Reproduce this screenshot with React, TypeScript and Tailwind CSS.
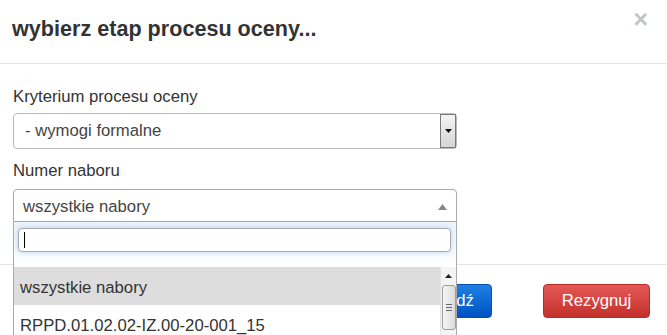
export default function App() {
  return (
    <div className="relative h-[335px] w-[667px] overflow-hidden bg-white font-['Liberation_Sans',Arial,sans-serif] text-[#333]">
      <header className="flex h-[64px] items-start justify-between border-b border-[#e5e5e5] pl-[12px] pr-[19px] pt-[15px]">
        <h4 className="text-[21.6px] font-bold leading-[28px]">wybierz etap procesu oceny...</h4>
        <button type="button" className="-mt-[6px] text-[25px] font-bold leading-[20px] text-[#c4c4c4]">
          ×
        </button>
      </header>

      <div className="px-[13px] pb-[42px] pt-[23px]">
        <label className="block text-[16.7px] leading-[20px]">Kryterium procesu oceny</label>
        <div className="mt-[6px] flex h-[36px] w-[444px] items-stretch rounded-[4px] border border-[#b9b9b9] text-[16.7px] text-[#444]">
          <span className="flex flex-1 items-center pl-[11px]">- wymogi formalne</span>
          <span className="flex w-[16px] items-center justify-center border border-[#7a7a7a] bg-gradient-to-b from-[#f4f4f4] to-[#d6d6d6]">
            <svg width="7" height="4" viewBox="0 0 7 4">
              <path d="M0 0h7L3.5 4z" fill="#111" />
            </svg>
          </span>
        </div>

        <label className="mt-[12px] block text-[16.7px] leading-[20px]">Numer naboru</label>
        <div className="mt-[8px] flex h-[33px] w-[444px] items-center justify-between rounded-t-[4px] border border-[#aaa] pl-[9px] pr-[9px] pt-[2px] text-[16.7px] text-[#444]">
          <span>wszystkie nabory</span>
          <svg width="9" height="6" viewBox="0 0 9 6">
            <path d="M0 6L4.5 0L9 6z" fill="#888" />
          </svg>
        </div>
      </div>

      <footer className="flex justify-end gap-[51px] border-t border-[#e5e5e5] pr-[17px] pt-[19px]">
        <button
          type="button"
          className="h-[34px] w-[92px] rounded-[4px] border border-[#0a4fae] bg-gradient-to-b from-[#1f7fe4] to-[#0052c2] text-[16.7px] text-white"
        >
          Przejdź
        </button>
        <button
          type="button"
          className="h-[34px] w-[107px] rounded-[4px] border border-[#b92c28] bg-gradient-to-b from-[#e35855] to-[#c4302c] text-[16.7px] text-white"
        >
          Rezygnuj
        </button>
      </footer>

      <div className="absolute left-[13px] top-[222px] h-[140px] w-[444px] border-x border-b border-[#aaa] bg-white">
        <div className="bg-gradient-to-b from-[#eef5fd] to-white pb-[15px] pl-[4px] pr-[5px] pt-[6px]">
          <div className="flex h-[24px] items-center rounded-[4px] border border-[#aaa] bg-white shadow-[0_0_6px_rgba(102,160,230,0.45)]">
            <span className="ml-[5px] h-[16px] w-px bg-black" />
          </div>
        </div>
        <div className="flex">
          <ul className="flex-1 text-[16.7px] leading-[18px] text-[#333]">
            <li className="bg-[#ddd] pb-[8px] pl-[6px] pt-[12px]">wszystkie nabory</li>
            <li className="pb-[8px] pl-[6px] pt-[12px]">RPPD.01.02.02-IZ.00-20-001_15</li>
            <li className="pb-[8px] pl-[6px] pt-[12px]">RPPD.01.02.02-IZ.00-20-002_15</li>
          </ul>
          <div className="flex w-[16px] flex-col items-center border-l border-[#e2e2e2] bg-[#f4f4f4]">
            <div className="flex h-[17px] items-center justify-center">
              <svg width="7" height="4" viewBox="0 0 7 4">
                <path d="M0 4L3.5 0L7 4z" fill="#222" />
              </svg>
            </div>
            <div className="mt-[1px] flex h-[45px] w-[14px] flex-col items-center justify-center gap-[2px] rounded-[3px] border border-[#9c9c9c] bg-gradient-to-r from-[#f6f6f6] to-[#dadada]">
              <span className="h-px w-[6px] bg-[#666]" />
              <span className="h-px w-[6px] bg-[#666]" />
              <span className="h-px w-[6px] bg-[#666]" />
            </div>
          </div>
        </div>
      </div>
    </div>
  );
}
